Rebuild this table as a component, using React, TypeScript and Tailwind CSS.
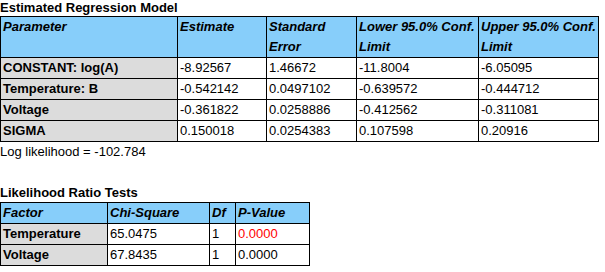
import React from 'react';

type Row = { label: string; values: string[] };

const regression: Row[] = [
    { label: 'CONSTANT: log(A)', values: ['-8.92567', '1.46672', '-11.8004', '-6.05095'] },
    { label: 'Temperature: B', values: ['-0.542142', '0.0497102', '-0.639572', '-0.444712'] },
    { label: 'Voltage', values: ['-0.361822', '0.0258886', '-0.412562', '-0.311081'] },
    { label: 'SIGMA', values: ['0.150018', '0.0254383', '0.107598', '0.20916'] },
];

const ratioTests = [
    { label: 'Temperature', chi: '65.0475', df: '1', p: '0.0000', red: true },
    { label: 'Voltage', chi: '67.8435', df: '1', p: '0.0000', red: false },
];

const th = "border border-black bg-[#87cefa] px-[2px] align-top text-left font-bold italic leading-[20px]";
const tdHead = "border border-black bg-[#dcdcdc] px-[2px] text-left font-bold leading-[20px]";
const td = "border border-black bg-white px-[2px] text-left leading-[20px]";

export default function App() {
    return (
        <div className="w-[605px] h-[272px] bg-white text-black text-[13px] font-['Liberation_Sans',Arial,sans-serif] overflow-hidden">
            <div className="font-bold leading-[16px]">Estimated Regression Model</div>
            <table className="border-collapse table-fixed w-[598px]">
                <colgroup>
                    <col className="w-[177px]" />
                    <col className="w-[89px]" />
                    <col className="w-[90px]" />
                    <col className="w-[122px]" />
                    <col className="w-[120px]" />
                </colgroup>
                <thead>
                    <tr>
                        <th className={th}>Parameter</th>
                        <th className={th}>Estimate</th>
                        <th className={th}>Standard<br />Error</th>
                        <th className={th}>Lower 95.0% Conf.<br />Limit</th>
                        <th className={th}>Upper 95.0% Conf.<br />Limit</th>
                    </tr>
                </thead>
                <tbody>
                    {regression.map(r => (
                        <tr key={r.label}>
                            <td className={tdHead}>{r.label}</td>
                            {r.values.map((v, i) => <td key={i} className={td}>{v}</td>)}
                        </tr>
                    ))}
                </tbody>
            </table>
            <div className="leading-[20px]">Log likelihood = -102.784</div>

            <div className="mt-[23px] font-bold leading-[16px]">Likelihood Ratio Tests</div>
            <table className="mt-px border-collapse table-fixed w-[309px]">
                <colgroup>
                    <col className="w-[107px]" />
                    <col className="w-[102px]" />
                    <col className="w-[26px]" />
                    <col className="w-[74px]" />
                </colgroup>
                <thead>
                    <tr>
                        <th className={th}>Factor</th>
                        <th className={th}>Chi-Square</th>
                        <th className={th}>Df</th>
                        <th className={th}>P-Value</th>
                    </tr>
                </thead>
                <tbody>
                    {ratioTests.map(r => (
                        <tr key={r.label}>
                            <td className={tdHead}>{r.label}</td>
                            <td className={td}>{r.chi}</td>
                            <td className={td}>{r.df}</td>
                            <td className={`${td} ${r.red ? 'text-[#ff0000]' : ''}`}>{r.p}</td>
                        </tr>
                    ))}
                </tbody>
            </table>
        </div>
    );
}
